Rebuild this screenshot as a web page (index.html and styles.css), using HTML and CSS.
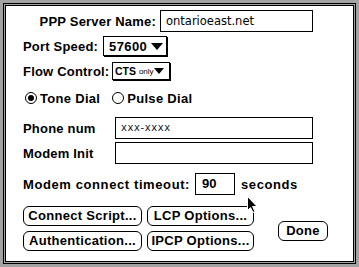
FILE: index.html
```html
<html>

<head>
  <meta name="viewport" content="width=device-width, initial-scale=1">
  <link rel="stylesheet" href="styles.css">
</head>

<body>
  <div class="frame">
    <div class="frame-in">
      <div class="panel">

        <div class="row row-server">
          <span class="label label-server">PPP Server Name:</span>
          <span class="field field-server">ontarioeast.net</span>
        </div>

        <div class="row row-speed">
          <span class="label label-speed">Port Speed:</span>
          <span class="popup popup-speed">57600 <span class="tri"></span></span>
        </div>

        <div class="row row-flow">
          <span class="label label-flow">Flow Control:</span>
          <span class="popup popup-flow"><b>CTS</b>&nbsp;<small>only</small><span class="tri tri-small"></span></span>
        </div>

        <div class="row row-dial">
          <span class="radio on"></span><span class="radio-text">Tone Dial</span>
          <span class="radio radio-pulse"></span><span class="radio-text">Pulse Dial</span>
        </div>

        <div class="row row-phone">
          <span class="label label-wide">Phone num</span>
          <span class="field field-long hint">xxx-xxxx</span>
        </div>

        <div class="row row-init">
          <span class="label label-wide">Modem Init</span>
          <span class="field field-long"></span>
        </div>

        <div class="row row-timeout">
          <span class="label label-timeout">Modem connect timeout:</span>
          <span class="field field-num">90</span>
          <span class="label seconds">seconds</span>
        </div>

        <div class="actions">
          <div class="btn-grid">
            <span class="btn">Connect Script...</span>
            <span class="btn">LCP Options...</span>
            <span class="btn">Authentication...</span>
            <span class="btn">IPCP Options...</span>
          </div>
          <span class="btn btn-done">Done</span>
        </div>

      </div>
    </div>
  </div>

  <svg class="cursor" width="12" height="17" viewBox="0 0 12 17">
    <path d="M0.5 0.5 L0.5 14.5 L3.5 11.5 L6 16.5 L8 15.5 L5.5 10.5 L10 10.5 Z" fill="#000" stroke="#fff" stroke-width="1" />
  </svg>
</body>

</html>
```

FILE: styles.css
```css
body {
  margin: 0;
  background-color: white;
  font-family: "Liberation Sans", Arial, sans-serif;
  font-weight: bold;
  font-size: 13px;
  color: #000;
}

.frame {
  width: 359px;
  height: 267px;
  box-sizing: border-box;
  border: 3px solid #a3a3a3;
  background-color: #a3a3a3;
}

.frame-in {
  height: 100%;
  box-sizing: border-box;
  border: 1px solid #000;
  padding: 1px;
}

.panel {
  height: 100%;
  box-sizing: border-box;
  border: 1px solid #000;
  background-color: #fff;
  padding-left: 17px;
  display: flex;
  flex-direction: column;
}

.row {
  display: flex;
  align-items: center;
}

.label {
  white-space: nowrap;
  letter-spacing: 0.2px;
}

.row-server {
  margin-top: 4px;
}

.label-server {
  width: 133px;
  text-align: right;
  margin-right: 4px;
}

.field {
  box-sizing: border-box;
  height: 22px;
  border: 1px solid #000;
  background: #fff;
  font-family: "DejaVu Sans", sans-serif;
  font-weight: normal;
  font-size: 11.5px;
  line-height: 20px;
  padding-left: 5px;
}

.field-server {
  width: 153px;
}

.row-speed {
  margin-top: 4px;
}

.label-speed {
  width: 80px;
}

.popup {
  box-sizing: border-box;
  border: 1px solid #000;
  box-shadow: 1px 1px 0 #000;
  display: flex;
  align-items: center;
}

.popup-speed {
  width: 64px;
  height: 20px;
  padding-left: 5px;
  letter-spacing: 0.4px;
}

.tri {
  width: 0;
  height: 0;
  border-left: 6px solid transparent;
  border-right: 6px solid transparent;
  border-top: 7px solid #000;
  margin-left: 4px;
}

.row-flow {
  margin-top: 6px;
}

.label-flow {
  width: 89px;
}

.popup-flow {
  width: 58px;
  height: 18px;
  padding-left: 2px;
  font-size: 10.5px;
}

.popup-flow small {
  font-size: 8px;
  font-weight: normal;
}

.tri-small {
  border-left-width: 5px;
  border-right-width: 5px;
  border-top-width: 6px;
  margin-left: 0;
}

.row-dial {
  margin-top: 11px;
  height: 14px;
}

.radio {
  box-sizing: border-box;
  width: 12px;
  height: 12px;
  border: 1px solid #000;
  border-radius: 50%;
  margin-left: 2px;
  display: flex;
  align-items: center;
  justify-content: center;
}

.radio.on::after {
  content: "";
  width: 6px;
  height: 6px;
  border-radius: 50%;
  background: #000;
}

.radio-text {
  margin-left: 3px;
  letter-spacing: 0.3px;
}

.radio-pulse {
  margin-left: 12px;
}

.row-phone {
  margin-top: 12px;
}

.row-init {
  margin-top: 3px;
}

.label-wide {
  width: 92px;
}

.field-long {
  width: 198px;
}

.hint {
  font-size: 10px;
  letter-spacing: 0.6px;
  color: #222;
}

.row-timeout {
  margin-top: 9px;
}

.label-timeout {
  width: 172px;
  letter-spacing: 0.6px;
}

.field-num {
  width: 40px;
  font-family: "Liberation Sans", Arial, sans-serif;
  font-weight: bold;
  font-size: 13px;
  padding-left: 6px;
}

.seconds {
  margin-left: 6px;
  letter-spacing: 0.6px;
}

.actions {
  margin-top: 11px;
  display: flex;
  align-items: center;
}

.btn-grid {
  display: grid;
  grid-template-columns: 119px 107px;
  column-gap: 5px;
  row-gap: 5px;
}

.btn {
  box-sizing: border-box;
  height: 20px;
  border: 1px solid #000;
  border-radius: 6px;
  text-align: center;
  line-height: 18px;
  letter-spacing: 0.3px;
  white-space: nowrap;
}

.btn-done {
  width: 50px;
  margin-left: 24px;
  margin-top: 5px;
}

.cursor {
  position: absolute;
  left: 247px;
  top: 196px;
}
```
